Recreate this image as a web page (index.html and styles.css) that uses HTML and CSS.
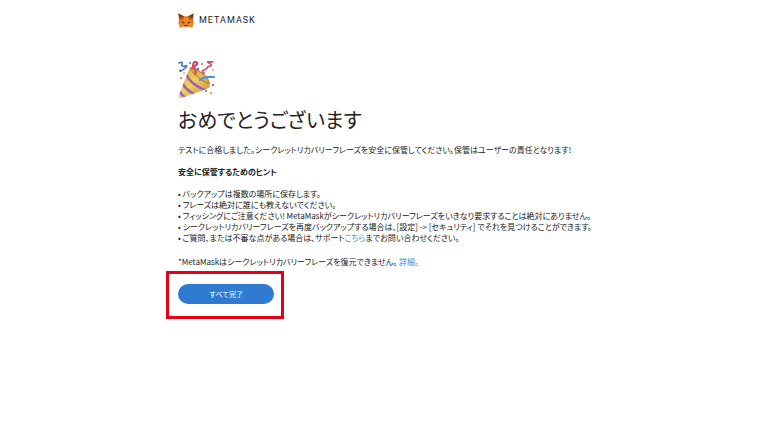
FILE: index.html
```html
<!DOCTYPE html>
<html lang="ja">
<head>
    <meta charset="UTF-8" />
    <meta name="viewport" content="width=device-width, initial-scale=1" />
    <title>MetaMask</title>
    <link rel="stylesheet" href="styles.css">
</head>
<body>
    <div class="container">
        <header class="logo">
            <svg class="fox" viewBox="0 0 32 30" aria-hidden="true">
                <path fill="#e2761b" d="M1 1l12 6h6l12-6-1 13 1 6-3 9-8-2-2 2h-4l-2-2-8 2-3-9 1-6z"/>
                <path fill="#b5581f" d="M1 1l12 6-3 5-8 2zM31 1L19 7l3 5 8 2z"/>
                <path fill="#f6851b" d="M13 7h6l3 12-2 5h-8l-2-5zM1 20h8l3 6-8 3zM31 20h-8l-3 6 8 3z"/>
                <path fill="#763d16" d="M1 1l10 6-8 3zM31 1L21 7l8 3z"/>
                <path fill="#233447" d="M8 17l5 2v2l-4-1zM24 17l-5 2v2l4-1zM13 24h6l1 2H12z"/>
                <path fill="#d5bfb2" d="M10 26l4 1h4l4-1-4 3h-4z"/>
            </svg>
            <span class="brand">METAMASK</span>
        </header>

        <main>
            <svg class="party" viewBox="0 0 38 38" aria-hidden="true">
                <defs>
                    <linearGradient id="gold" x1="0" y1="0" x2="1" y2="1">
                        <stop offset="0" stop-color="#c99a35"/>
                        <stop offset=".45" stop-color="#f2cf5e"/>
                        <stop offset="1" stop-color="#bd8a30"/>
                    </linearGradient>
                    <clipPath id="cone">
                        <path d="M12 6C19 7 29 16 32 24c0 2-1 3-3 4L3 37c-2 1-3-1-2-3z"/>
                    </clipPath>
                </defs>
                <g clip-path="url(#cone)">
                    <path fill="url(#gold)" d="M0 5h34v34H0z"/>
                    <path fill="none" stroke="#9b5cc4" stroke-width="2.4" d="M8 13q4 10 19 16M4 21q3 8 14 13M1 29q2 5 7 8"/>
                </g>
                <path fill="#b98a38" d="M12 6c6-1 20 10 20 17-1 3-20-10-20-17z"/>
                <path fill="#e3b94f" d="M14 8c6 1 15 8 16 13-5-1-15-8-16-13z"/>
                <g fill="none" stroke-linecap="round">
                    <path stroke="#4277c9" stroke-width="1.6" d="M1 2q4-2 3 1t3 2-1 3-4 1"/>
                    <path stroke="#dd4864" stroke-width="2.2" d="M17 13q2-4-2-7 0-6 3-5t-1 4"/>
                    <path stroke="#d94864" stroke-width="1.7" d="M26 12q-3-2 0-3t3-2 3-2-1-3 4-1"/>
                    <path stroke="#4d91d9" stroke-width="2.2" d="M22 19q5-4 14-3"/>
                </g>
                <g fill="#4879ca">
                    <circle cx="12" cy="2" r="1"/>
                    <circle cx="20" cy="8" r="1.2"/>
                    <circle cx="28" cy="30" r="1.1"/>
                </g>
                <g fill="#e65666">
                    <circle cx="3" cy="17" r="1"/>
                    <circle cx="24" cy="3" r="1"/>
                    <circle cx="35" cy="24" r="1.2"/>
                </g>
                <g fill="#edae45">
                    <circle cx="6" cy="12" r="1"/>
                    <circle cx="35" cy="9" r="1"/>
                    <circle cx="33" cy="32" r="1.3"/>
                </g>
            </svg>

            <h1>おめでとうございます</h1>
            <p>テストに合格しました。シークレットリカバリーフレーズを安全に保管してください。保管はユーザーの責任となります!</p>
            <h2>安全に保管するためのヒント</h2>
            <ul class="tips">
                <li>バックアップは複数の場所に保存します。</li>
                <li>フレーズは絶対に誰にも教えないでください。</li>
                <li>フィッシングにご注意ください! MetaMaskがシークレットリカバリーフレーズをいきなり要求することは絶対にありません。</li>
                <li>シークレットリカバリーフレーズを再度バックアップする場合は、[設定] -&gt; [セキュリティ] でそれを見つけることができます。</li>
                <li>ご質問、または不審な点がある場合は、サポート<a href="#support">こちら</a>までお問い合わせください。</li>
            </ul>
            <p class="note">*MetaMaskはシークレットリカバリーフレーズを復元できません。 <a href="#more">詳細。</a></p>
            <div class="action">
                <button type="button">すべて完了</button>
            </div>
        </main>
    </div>
</body>
</html>
```
FILE: styles.css
```css
* {
    box-sizing: border-box;
}
body {
    min-height: 100vh;
    margin: 0;
    background-color: #fff;
    color: #222;
    font-family: "Noto Sans CJK JP", sans-serif;
    font-size: 8px;
    line-height: 11px;
    font-feature-settings: "palt";
}
.container {
    max-width: 424px;
    margin: 0 auto;
    padding-top: 12px;
}
.logo {
    display: flex;
    align-items: center;
    gap: 5px;
    height: 16px;
    margin-bottom: 33px;
}
.fox {
    width: 16px;
    height: 15px;
}
.brand {
    font-family: Roboto, sans-serif;
    font-size: 9px;
    font-weight: 400;
    letter-spacing: 1px;
}
.party {
    display: block;
    width: 38px;
    height: 38px;
}
h1 {
    margin: 8px 0 12px;
    font-size: 20px;
    font-weight: 400;
    line-height: 25px;
}
p {
    margin: 0;
}
h2 {
    margin: 11px 0;
    font-size: 8px;
    font-weight: 700;
    line-height: 11px;
}
.tips {
    margin: 0;
    padding: 0;
    list-style: none;
}
.tips li::before {
    content: "• ";
}
.note {
    margin-top: 13px;
}
a {
    color: #3b8de0;
    text-decoration: none;
}
.action {
    position: relative;
    width: 96px;
    margin-top: 17px;
}
.action::after {
    content: "";
    position: absolute;
    inset: -13px -10px -15px -12px;
    border: 3px solid #e60012;
    pointer-events: none;
}
button {
    display: block;
    width: 100%;
    height: 20px;
    padding: 0;
    border: none;
    border-radius: 10px;
    background-color: #2f7bd2;
    color: #fff;
    font-family: inherit;
    font-size: 7px;
    cursor: pointer;
}
```
